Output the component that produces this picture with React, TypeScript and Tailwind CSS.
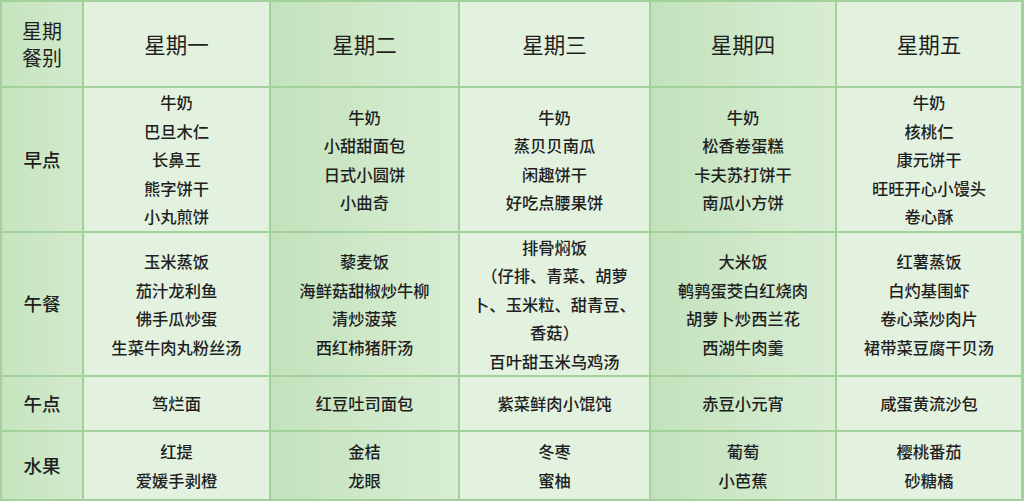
import React from "react";

const days = ["星期一", "星期二", "星期三", "星期四", "星期五"];

type Row = { label: string; cells: string[][] };

const rows: Row[] = [
  {
    label: "早点",
    cells: [
      ["牛奶", "巴旦木仁", "长鼻王", "熊字饼干", "小丸煎饼"],
      ["牛奶", "小甜甜面包", "日式小圆饼", "小曲奇"],
      ["牛奶", "蒸贝贝南瓜", "闲趣饼干", "好吃点腰果饼"],
      ["牛奶", "松香卷蛋糕", "卡夫苏打饼干", "南瓜小方饼"],
      ["牛奶", "核桃仁", "康元饼干", "旺旺开心小馒头", "卷心酥"],
    ],
  },
  {
    label: "午餐",
    cells: [
      ["玉米蒸饭", "茄汁龙利鱼", "佛手瓜炒蛋", "生菜牛肉丸粉丝汤"],
      ["藜麦饭", "海鲜菇甜椒炒牛柳", "清炒菠菜", "西红柿猪肝汤"],
      ["排骨焖饭", "（仔排、青菜、胡萝", "卜、玉米粒、甜青豆、", "香菇）", "百叶甜玉米乌鸡汤"],
      ["大米饭", "鹌鹑蛋茭白红烧肉", "胡萝卜炒西兰花", "西湖牛肉羹"],
      ["红薯蒸饭", "白灼基围虾", "卷心菜炒肉片", "裙带菜豆腐干贝汤"],
    ],
  },
  {
    label: "午点",
    cells: [["笃烂面"], ["红豆吐司面包"], ["紫菜鲜肉小馄饨"], ["赤豆小元宵"], ["咸蛋黄流沙包"]],
  },
  {
    label: "水果",
    cells: [
      ["红提", "爱媛手剥橙"],
      ["金桔", "龙眼"],
      ["冬枣", "蜜柚"],
      ["葡萄", "小芭蕉"],
      ["樱桃番茄", "砂糖橘"],
    ],
  },
];

const oddBg = "bg-[#e3f2df]";
const evenBg = "bg-linear-to-r from-[#c3e2bc] to-[#d8edd3]";
const labelBg = "bg-linear-to-r from-[#c6e4bf] to-[#d2eacc]";

export default function App() {
  return (
    <div
      className="w-[1024px] h-[501px] bg-[#a3d19b] p-[2px] pr-[3px] grid grid-cols-[80px_185px_187px_189px_184px_1fr] grid-rows-[84px_143px_142px_53px_1fr] gap-[2px] text-[#1f1f1f] overflow-hidden"
      style={{ fontFamily: '"Noto Sans CJK SC", "Noto Sans", sans-serif' }}
    >
      <div className={`${labelBg} flex flex-col items-center justify-center text-[20px] leading-[27px]`}>
        <span>星期</span>
        <span>餐别</span>
      </div>
      {days.map((d, i) => (
        <div
          key={d}
          className={`${i % 2 === 1 ? evenBg : oddBg} flex items-center justify-center text-[21.5px]`}
        >
          {d}
        </div>
      ))}
      {rows.map((r) => (
        <React.Fragment key={r.label}>
          <div className={`${labelBg} flex items-center justify-center text-[18.5px] font-medium`}>
            {r.label}
          </div>
          {r.cells.map((c, i) => (
            <div
              key={i}
              className={`${i % 2 === 1 ? evenBg : oddBg} flex flex-col items-center justify-center text-[16.3px] leading-[28.5px] font-medium whitespace-nowrap`}
            >
              {c.map((t, j) => (
                <span key={j}>{t}</span>
              ))}
            </div>
          ))}
        </React.Fragment>
      ))}
    </div>
  );
}
